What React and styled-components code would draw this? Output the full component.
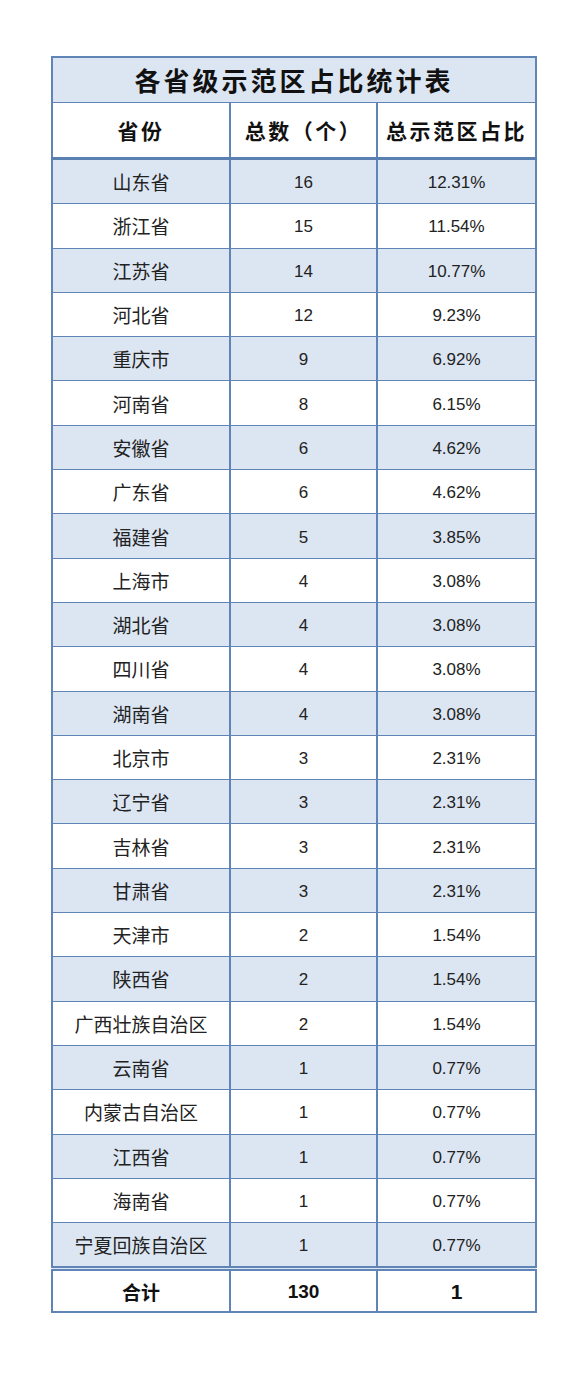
import styled, { createGlobalStyle } from "styled-components";

const rows = [
  ["山东省", 16, "12.31%"],
  ["浙江省", 15, "11.54%"],
  ["江苏省", 14, "10.77%"],
  ["河北省", 12, "9.23%"],
  ["重庆市", 9, "6.92%"],
  ["河南省", 8, "6.15%"],
  ["安徽省", 6, "4.62%"],
  ["广东省", 6, "4.62%"],
  ["福建省", 5, "3.85%"],
  ["上海市", 4, "3.08%"],
  ["湖北省", 4, "3.08%"],
  ["四川省", 4, "3.08%"],
  ["湖南省", 4, "3.08%"],
  ["北京市", 3, "2.31%"],
  ["辽宁省", 3, "2.31%"],
  ["吉林省", 3, "2.31%"],
  ["甘肃省", 3, "2.31%"],
  ["天津市", 2, "1.54%"],
  ["陕西省", 2, "1.54%"],
  ["广西壮族自治区", 2, "1.54%"],
  ["云南省", 1, "0.77%"],
  ["内蒙古自治区", 1, "0.77%"],
  ["江西省", 1, "0.77%"],
  ["海南省", 1, "0.77%"],
  ["宁夏回族自治区", 1, "0.77%"],
];

const GlobalStyle = createGlobalStyle`
  body {
    margin: 0;
    background: #ffffff;
    font-family: "Noto Sans CJK SC", "Noto Sans", sans-serif;
  }
`;

const Page = styled.div`
  padding: 56px 0 0 51px;
`;

const Table = styled.table`
  width: 484px;
  border-collapse: collapse;
  table-layout: fixed;
  border: 2px solid #5f84b5;
`;

const Cell = styled.td`
  border: 2px solid #5f84b5;
  border-top-width: 1.5px;
  border-bottom-width: 1.5px;
  height: 41.3px;
  padding: 0;
  text-align: center;
  vertical-align: middle;
  color: #222;
  background: ${(p) => (p.$shaded ? "#dce6f2" : "#ffffff")};
`;

const Name = styled(Cell)`
  font-family: "Noto Sans CJK SC", sans-serif;
  font-size: 19px;
  line-height: 1;
`;

const Num = styled(Cell)`
  font-family: "Liberation Sans", Arial, sans-serif;
  font-size: 17px;
  line-height: 1;
  padding-top: 2px;
`;

const Title = styled.th`
  height: 44px;
  padding: 0;
  background: #dce6f2;
  border-bottom: 1.5px solid #5f84b5;
  font-family: "Noto Sans CJK SC", sans-serif;
  font-size: 26px;
  font-weight: 700;
  letter-spacing: 3px;
  color: #111;
  line-height: 1;
`;

const Head = styled.th`
  height: 54px;
  padding: 0;
  background: #ffffff;
  border-left: 2px solid #5f84b5;
  border-right: 2px solid #5f84b5;
  border-bottom: 3px solid #5a80b2;
  font-family: "Noto Sans CJK SC", sans-serif;
  font-size: 21px;
  font-weight: 700;
  letter-spacing: 2.5px;
  color: #111;
  line-height: 1;
`;

const TotalCell = styled.td`
  height: 40px;
  padding: 0;
  text-align: center;
  border-left: 2px solid #5f84b5;
  border-right: 2px solid #5f84b5;
  border-top: 5px double #5f84b5;
  font-family: ${(p) =>
    p.$num ? '"Liberation Sans", Arial, sans-serif' : '"Noto Sans CJK SC", sans-serif'};
  font-size: ${(p) => (p.$big ? "21px" : "19px")};
  font-weight: 700;
  color: #111;
  line-height: 1;
`;

export default function App() {
  return (
    <Page>
      <GlobalStyle />
      <Table>
        <colgroup>
          <col style={{ width: 178 }} />
          <col style={{ width: 147 }} />
          <col style={{ width: 159 }} />
        </colgroup>
        <thead>
          <tr>
            <Title colSpan={3}>各省级示范区占比统计表</Title>
          </tr>
          <tr>
            <Head>省份</Head>
            <Head>总数（个）</Head>
            <Head>总示范区占比</Head>
          </tr>
        </thead>
        <tbody>
          {rows.map(([name, count, pct], i) => (
            <tr key={name}>
              <Name $shaded={i % 2 === 0}>{name}</Name>
              <Num $shaded={i % 2 === 0}>{count}</Num>
              <Num $shaded={i % 2 === 0}>{pct}</Num>
            </tr>
          ))}
          <tr>
            <TotalCell>合计</TotalCell>
            <TotalCell $num>130</TotalCell>
            <TotalCell $num $big>1</TotalCell>
          </tr>
        </tbody>
      </Table>
    </Page>
  );
}
